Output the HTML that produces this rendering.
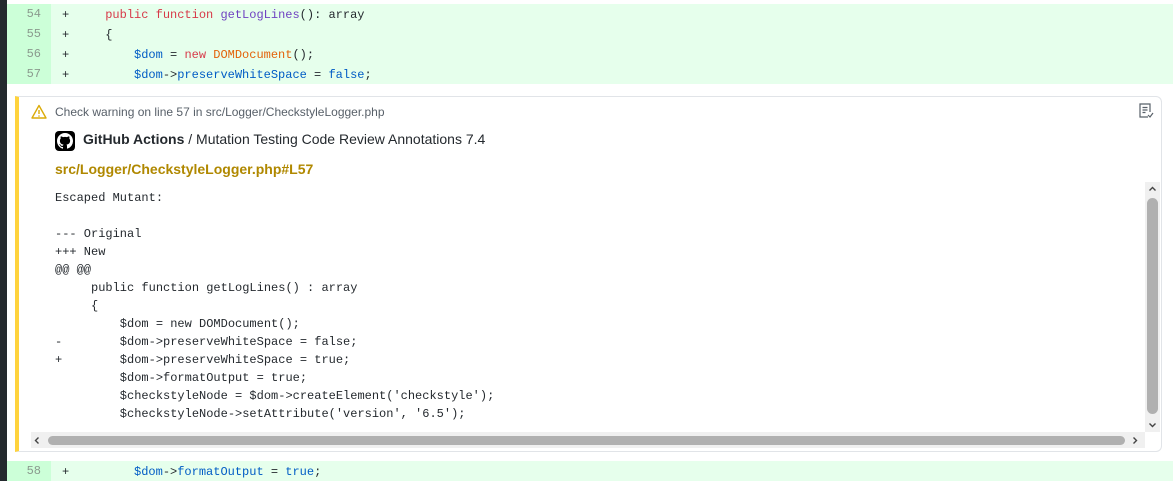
<!DOCTYPE html>
<html><head><style>
*{margin:0;padding:0;box-sizing:border-box}
body{width:1173px;height:481px;background:#fff;position:relative;overflow:hidden;font-family:"Liberation Sans",sans-serif}
.lbar{position:absolute;left:0;top:0;width:7px;height:481px;background:#24292e}
.row{position:absolute;left:7px;width:1166px;height:20px;background:#e6ffec;font:12px/20px "Liberation Mono",monospace;color:#24292e;white-space:pre}
.num{position:absolute;left:0;top:0;width:44px;height:20px;background:#ccffd8;color:#8a9a8e;text-align:right;padding-right:10px;font-size:12px}
.code{position:absolute;left:55px;top:1px}
.k{color:#d73a49}.f{color:#6f42c1}.v{color:#005cc5}.o{color:#e36209}
.box{position:absolute;left:15px;top:96px;width:1147px;height:356px;border:1px solid #e1e4e8;border-left:4px solid #ffd33d;border-radius:0 6px 6px 0;background:#fff}
.warn{position:absolute;left:55px;top:105px;font-size:12px;color:#586069}
.title{position:absolute;left:83px;top:131px;font-size:14px;color:#24292e}
.path{position:absolute;left:55px;top:161px;font-size:14px;font-weight:bold;color:#b08800}
pre{position:absolute;left:55px;top:189px;font:12px/18px "Liberation Mono",monospace;color:#24292e}
.vs{position:absolute;left:1145px;top:182px;width:15px;height:250px;background:#f0f0f0}
.vt{position:absolute;left:1147px;top:198px;width:11px;height:216px;background:#b0b0b0;border-radius:6px}
.hs{position:absolute;left:31px;top:432px;width:1114px;height:16px;background:#f0f0f0}
.ht{position:absolute;left:48px;top:436px;width:1077px;height:9px;background:#b0b0b0;border-radius:5px}
</style></head><body>
<div class="lbar"></div>
<div class="row" style="top:4px"><div class="num">54</div><span class="code">+     <span class="k">public function</span> <span class="f">getLogLines</span>(): array</span></div>
<div class="row" style="top:24px"><div class="num">55</div><span class="code">+     {</span></div>
<div class="row" style="top:44px"><div class="num">56</div><span class="code">+         <span class="v">$dom</span> = <span class="k">new</span> <span class="o">DOMDocument</span>();</span></div>
<div class="row" style="top:64px"><div class="num">57</div><span class="code">+         <span class="v">$dom</span>-&gt;<span class="v">preserveWhiteSpace</span> = <span class="v">false</span>;</span></div>
<div class="box"></div>
<svg style="position:absolute;left:31px;top:104px" width="16" height="15" viewBox="0 0 16 15"><path d="M8 1.5L15 14H1Z" fill="none" stroke="#dbab09" stroke-width="1.4" stroke-linejoin="round"/><path d="M8 6v4" stroke="#dbab09" stroke-width="1.4"/><circle cx="8" cy="12" r=".8" fill="#dbab09"/></svg>
<div class="warn">Check warning on line 57 in src/Logger/CheckstyleLogger.php</div>
<svg style="position:absolute;left:1138px;top:102px" width="16" height="17" viewBox="0 0 16 17"><path d="M10 15H2V2h10v8" fill="none" stroke="#586069" stroke-width="1.2"/><path d="M4.5 5.5h5M4.5 8h5M4.5 10.5h3M10 13l2 2 3-4" fill="none" stroke="#586069" stroke-width="1.2"/></svg>
<div style="position:absolute;left:55px;top:131px;width:20px;height:20px;background:#000;border-radius:4px"></div>
<svg style="position:absolute;left:57px;top:133px" width="16" height="16" viewBox="0 0 16 16"><path fill="#fff" d="M8 0C3.58 0 0 3.58 0 8c0 3.540 2.29 6.53 5.47 7.59.4.07.55-.17.55-.38v-1.33c-2.23.48-2.7-1.07-2.7-1.07-.36-.92-.89-1.17-.89-1.17-.73-.5.05-.49.05-.49.8.06 1.23.83 1.230.83.71 1.23 1.87.87 2.33.66.07-.52.28-.87.51-1.07-1.78-.2-3.64-.89-3.640-3.95 0-.87.31-1.59.82-2.15-.08-.2-.36-1.02.08-2.12 0 0 .67-.21 2.2.82.64-.18 1.32-.27 2-.27.68 0 1.36.09 2 .27 1.53-1.04 2.2-.82 2.2-.82.44 1.1.16 1.92.08 2.12.51.56.82 1.27.82 2.15 0 3.07-1.87 3.75-3.65 3.95.29.25.54.73.54 1.48v2.2c0 .21.15.46.55.38A8.013 8.013 0 0016 8c0-4.42-3.58-8-8-8z"/></svg>
<div class="title"><b>GitHub Actions</b> / Mutation Testing Code Review Annotations 7.4</div>
<div class="path">src/Logger/CheckstyleLogger.php#L57</div>
<pre>Escaped Mutant:

--- Original
+++ New
@@ @@
     public function getLogLines() : array
     {
         $dom = new DOMDocument();
-        $dom-&gt;preserveWhiteSpace = false;
+        $dom-&gt;preserveWhiteSpace = true;
         $dom-&gt;formatOutput = true;
         $checkstyleNode = $dom-&gt;createElement('checkstyle');
         $checkstyleNode-&gt;setAttribute('version', '6.5');</pre>
<div class="vs"></div><div class="vt"></div>
<svg style="position:absolute;left:1148px;top:185px" width="9" height="8"><path d="M1.5 5.5L4.5 2.5 7.5 5.5" fill="none" stroke="#444" stroke-width="1.4"/></svg>
<svg style="position:absolute;left:1148px;top:421px" width="9" height="8"><path d="M1.5 2.5L4.5 5.5 7.5 2.5" fill="none" stroke="#444" stroke-width="1.4"/></svg>
<div class="hs"></div><div class="ht"></div>
<svg style="position:absolute;left:33px;top:436px" width="8" height="9"><path d="M5.5 1.5L2.5 4.5 5.5 7.5" fill="none" stroke="#444" stroke-width="1.4"/></svg>
<svg style="position:absolute;left:1131px;top:436px" width="8" height="9"><path d="M2.5 1.5L5.5 4.5 2.5 7.5" fill="none" stroke="#444" stroke-width="1.4"/></svg>
<div class="row" style="top:461px"><div class="num">58</div><span class="code">+         <span class="v">$dom</span>-&gt;<span class="v">formatOutput</span> = <span class="v">true</span>;</span></div>
</body></html>
